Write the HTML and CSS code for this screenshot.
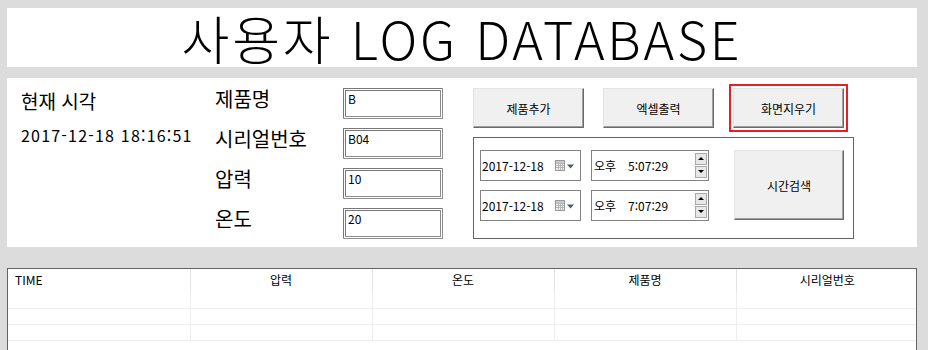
FILE: index.html
```html
<!DOCTYPE html>
<html lang="ko">
  <head>
    <meta charset="UTF-8" />
    <meta name="viewport" content="width=device-width,initial-scale=1" />
    <title>사용자 LOG DATABASE</title>
    <link rel="stylesheet" href="styles.css">
  </head>

  <body>
    <header class="title">사용자 LOG DATABASE</header>

    <section class="panel">
      <div class="clock">
        <h2>현재 시각</h2>
        <p>2017-12-18 18:16:51</p>
      </div>

      <div class="fields">
        <span class="label">제품명</span>
        <div class="textbox">B</div>
        <span class="label">시리얼번호</span>
        <div class="textbox">B04</div>
        <span class="label">압력</span>
        <div class="textbox">10</div>
        <span class="label">온도</span>
        <div class="textbox">20</div>
      </div>

      <div class="actions">
        <div class="buttons">
          <button>제품추가</button>
          <button>엑셀출력</button>
          <button class="focused">화면지우기</button>
        </div>

        <div class="search">
          <div class="pickers">
            <div class="picker-row">
              <div class="date">
                <span>2017-12-18</span>
                <svg class="cal" width="19" height="12" viewBox="0 0 19 12">
                  <rect x="0.5" y="0.5" width="9" height="10" fill="#f4f4f4" stroke="#9a9a9a" />
                  <path d="M1 3.5h8M1 5.5h8M1 7.5h8M3.5 3v7M5.5 3v7M7.5 3v7" stroke="#b8b8b8" />
                  <rect x="1" y="1" width="8" height="2" fill="#c8c8c8" />
                  <path d="M12 4.5h7l-3.5 4z" fill="#4d5a7c" />
                </svg>
              </div>
              <div class="time">
                <span class="ampm">오후</span>
                <span>5:07:29</span>
                <div class="spin">
                  <i class="up"></i>
                  <i class="down"></i>
                </div>
              </div>
            </div>
            <div class="picker-row">
              <div class="date">
                <span>2017-12-18</span>
                <svg class="cal" width="19" height="12" viewBox="0 0 19 12">
                  <rect x="0.5" y="0.5" width="9" height="10" fill="#f4f4f4" stroke="#9a9a9a" />
                  <path d="M1 3.5h8M1 5.5h8M1 7.5h8M3.5 3v7M5.5 3v7M7.5 3v7" stroke="#b8b8b8" />
                  <rect x="1" y="1" width="8" height="2" fill="#c8c8c8" />
                  <path d="M12 4.5h7l-3.5 4z" fill="#4d5a7c" />
                </svg>
              </div>
              <div class="time">
                <span class="ampm">오후</span>
                <span>7:07:29</span>
                <div class="spin">
                  <i class="up"></i>
                  <i class="down"></i>
                </div>
              </div>
            </div>
          </div>
          <button class="search-btn">시간검색</button>
        </div>
      </div>
    </section>

    <div class="log">
      <table>
        <thead>
          <tr>
            <th class="left">TIME</th>
            <th>압력</th>
            <th>온도</th>
            <th>제품명</th>
            <th>시리얼번호</th>
          </tr>
        </thead>
        <tbody>
          <tr><td></td><td></td><td></td><td></td><td></td></tr>
          <tr><td></td><td></td><td></td><td></td><td></td></tr>
          <tr><td></td><td></td><td></td><td></td><td></td></tr>
        </tbody>
      </table>
    </div>
  </body>
</html>
```

FILE: styles.css
```css
:root {
  --color-background: rgb(220 220 220);
  --color-panel: rgb(255 255 255);
  --color-button: rgb(240 240 240);
  --color-border: rgb(100 100 100);
  --color-line: rgb(238 238 238);
  --font-family: "Noto Sans CJK KR", "Noto Sans", sans-serif;
}

* {
  box-sizing: border-box;
  margin: 0;
  padding: 0;
}

html,
body {
  height: 350px;
  overflow: hidden;
}

body {
  background-color: var(--color-background);
  color: rgb(0 0 0);
  font-family: var(--font-family);
  font-size: 12px;
  padding: 8px 11px 0 7px;
}

.title {
  background-color: var(--color-panel);
  font-size: 52px;
  font-weight: 300;
  height: 59px;
  letter-spacing: 2.8px;
  line-height: 59px;
  padding-bottom: 3px;
  text-align: center;
}

.panel {
  background-color: var(--color-panel);
  display: flex;
  height: 169px;
  margin-top: 11px;
  padding: 10px 0 0 14px;
}

/* current time */
.clock {
  width: 194px;
}

.clock h2 {
  font-size: 19px;
  font-weight: normal;
  line-height: 24px;
  margin-top: 1px;
}

.clock p {
  font-size: 16px;
  letter-spacing: 1.2px;
  margin-top: 10px;
}

/* input fields */
.fields {
  display: grid;
  grid-template-columns: 128px 130px;
  grid-auto-rows: 40px;
}

.label {
  font-size: 20px;
  line-height: 22px;
}

.textbox {
  border: 3px double rgb(140 140 140);
  border-top-color: rgb(120 120 120);
  border-left-color: rgb(120 120 120);
  font-size: 12px;
  height: 31px;
  line-height: 14px;
  padding: 1px 2px;
  width: 100px;
}

/* buttons */
button {
  background-color: var(--color-button);
  border: 1px solid;
  border-color: rgb(227 227 227) rgb(105 105 105) rgb(105 105 105) rgb(227 227 227);
  box-shadow: inset -1px -1px rgb(160 160 160);
  font-family: var(--font-family);
  font-size: 12px;
  height: 40px;
  width: 111px;
}

.buttons {
  display: flex;
  column-gap: 19px;
}

.focused {
  outline: 2px solid rgb(230 30 38);
  outline-offset: 2px;
}

.search {
  border: 1px solid var(--color-border);
  display: flex;
  height: 102px;
  margin-top: 9px;
  padding: 12px 0 0 6px;
  width: 381px;
}

.pickers {
  display: flex;
  flex-direction: column;
  row-gap: 9px;
}

.picker-row {
  display: flex;
  column-gap: 10px;
}

.date,
.time {
  align-items: center;
  border: 1px solid rgb(130 130 130);
  display: flex;
  height: 31px;
}

.date {
  justify-content: space-between;
  padding: 0 6px 0 1px;
  width: 101px;
}

.time {
  padding-left: 2px;
  width: 118px;
}

.ampm {
  margin-right: 12px;
}

.spin {
  display: flex;
  flex-direction: column;
  margin-left: auto;
  margin-right: 1px;
  row-gap: 1px;
}

.spin i {
  background-color: rgb(232 232 232);
  border: 1px solid rgb(170 170 170);
  display: block;
  height: 12px;
  position: relative;
  width: 12px;
}

.spin i::after {
  border-left: 3px solid transparent;
  border-right: 3px solid transparent;
  content: "";
  left: 2px;
  position: absolute;
  top: 3px;
}

.spin .up::after {
  border-bottom: 3px solid rgb(0 0 0);
}

.spin .down::after {
  border-top: 3px solid rgb(0 0 0);
}

.search-btn {
  height: 70px;
  margin-left: 25px;
  width: 110px;
}

/* log table */
.log {
  background-color: var(--color-panel);
  border: 1px solid var(--color-border);
  border-bottom: none;
  height: 82px;
  margin-top: 21px;
  overflow: hidden;
  width: 910px;
}

table {
  border-collapse: collapse;
  table-layout: fixed;
  width: 100%;
}

th {
  border-right: 1px solid rgb(227 227 227);
  font-weight: normal;
  height: 23px;
  padding-bottom: 2px;
  width: 182px;
}

th.left {
  padding-left: 7px;
  text-align: left;
}

th:last-child,
td:last-child {
  border-right: none;
}

td {
  border-bottom: 1px solid var(--color-line);
  border-right: 1px solid var(--color-line);
  height: 16px;
}
```
